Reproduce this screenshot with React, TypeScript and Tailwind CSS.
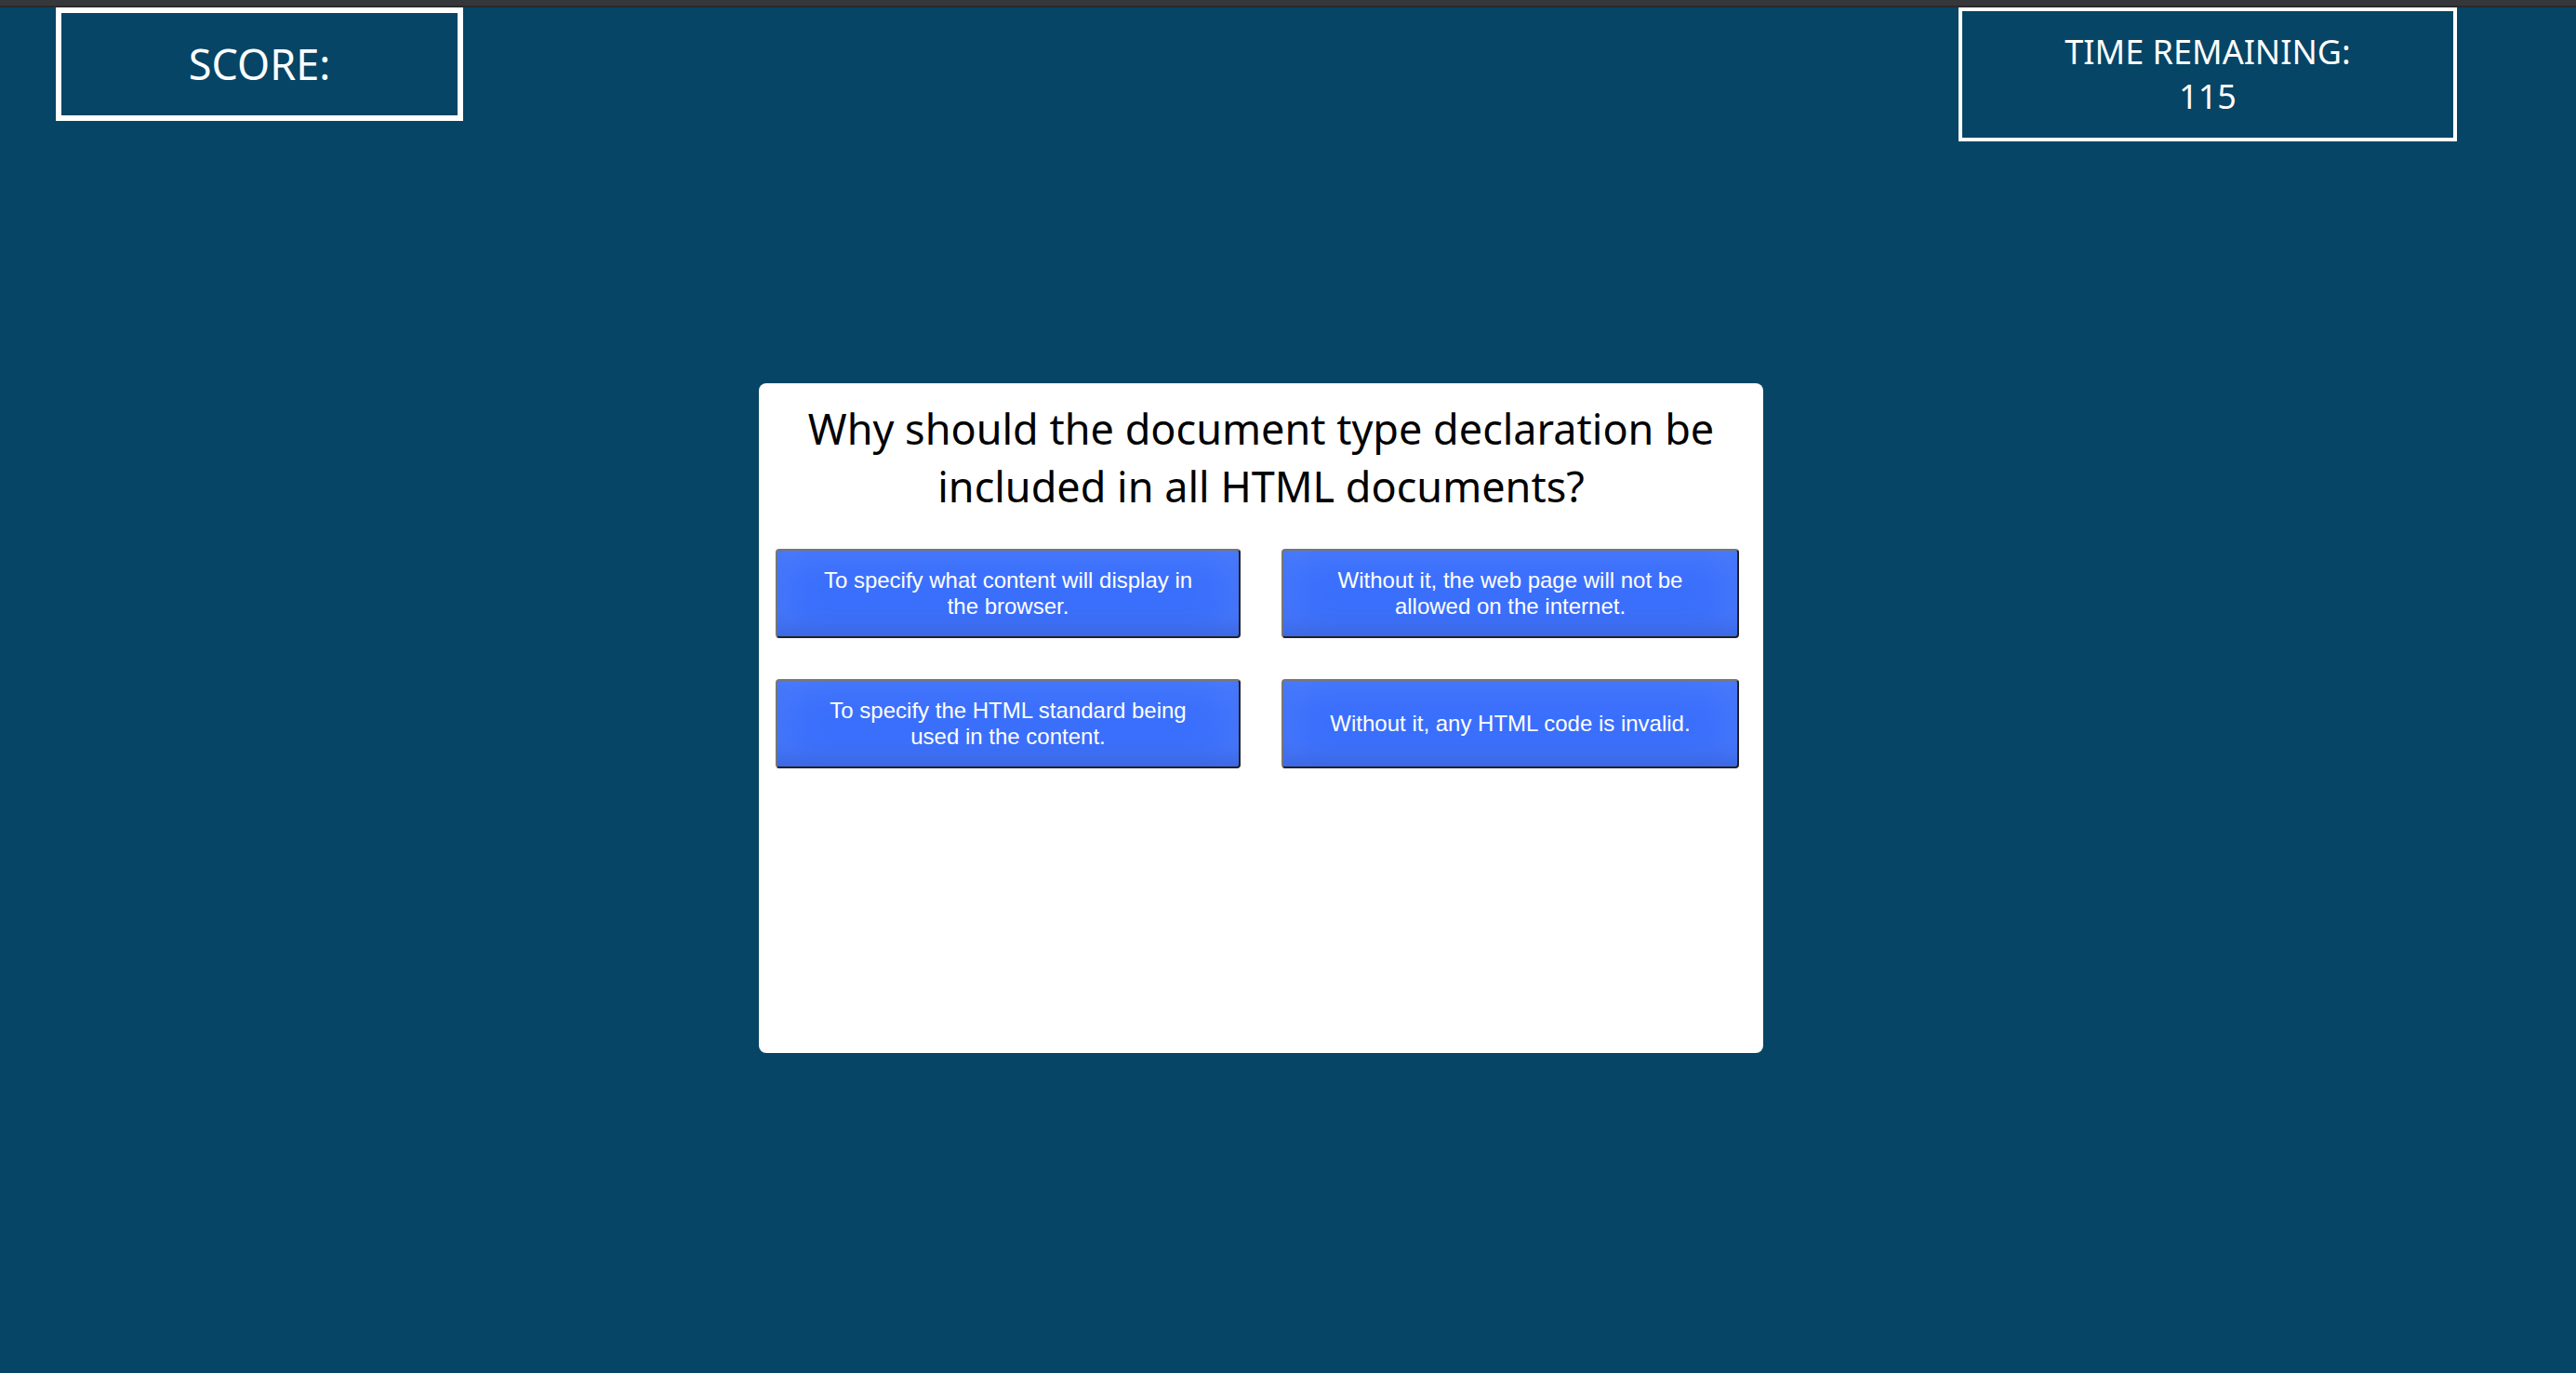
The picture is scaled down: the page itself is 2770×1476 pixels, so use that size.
const answers = [
  "To specify what content will display in the browser.",
  "Without it, the web page will not be allowed on the internet.",
  "To specify the HTML standard being used in the content.",
  "Without it, any HTML code is invalid.",
];

function AnswerButton({ text }: { text: string }) {
  return (
    <button
      type="button"
      className="flex h-24 items-center justify-center rounded-[4px] border-2 border-t-[#767676] border-r-[#212121] border-b-[#212121] border-l-[#767676] bg-[#3a6ffc] px-12 text-center font-['Liberation_Sans',Arial,sans-serif] text-[24px] leading-7 text-white shadow-[inset_0_-20px_24px_-12px_rgba(54,98,217,0.9),inset_0_0_48px_rgba(255,255,255,0.12)]"
    >
      {text}
    </button>
  );
}

export default function App() {
  return (
    <div className="flex min-h-screen flex-col bg-[#064565] font-['Noto_Sans',sans-serif]">
      <div className="h-2 border-b-2 border-[#2a2a2a] bg-[#36373b]" />
      <header className="flex h-36 items-start justify-between pr-32 pl-[60px] text-center text-white">
        <div className="w-[438px] border-[6px] border-white px-6 py-6 text-[45px] leading-[62px]">
          SCORE:
        </div>
        <div className="w-[536px] border-4 border-white py-5 text-[36px] leading-[48px]">
          <p>TIME REMAINING:</p>
          <p>115</p>
        </div>
      </header>
      <main className="mt-[260px] flex justify-center pr-[58px]">
        <section className="min-h-[720px] w-[1080px] rounded-lg bg-white pt-[18px]">
          <h1 className="mb-9 px-5 text-center text-[45px] leading-[62px] text-black">
            Why should the document type declaration be included in all HTML documents?
          </h1>
          <div className="grid grid-cols-[500fr_492fr] gap-11 pr-[26px] pl-[18px]">
            {answers.map((text) => (
              <AnswerButton key={text} text={text} />
            ))}
          </div>
        </section>
      </main>
    </div>
  );
}
